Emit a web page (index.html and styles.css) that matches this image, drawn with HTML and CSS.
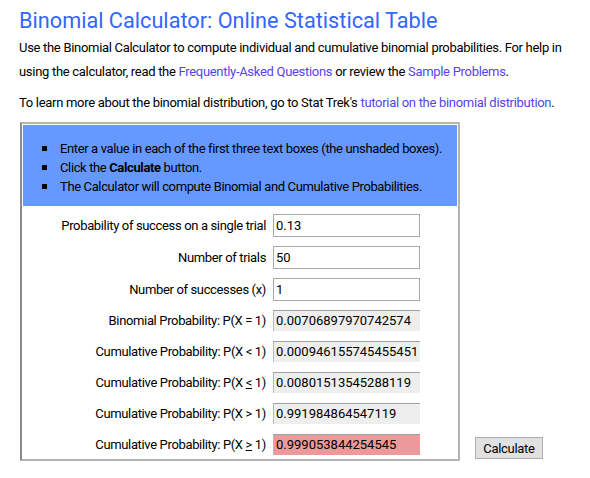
FILE: index.html
```html
<!DOCTYPE html>
<html>
<head>
<meta charset="utf-8">
<link rel="stylesheet" href="styles.css">
</head>
<body>
<h1 class="title">Binomial Calculator: Online Statistical Table</h1>
<p class="intro">Use the Binomial Calculator to compute individual and cumulative binomial probabilities. For help in using the calculator, read the <a class="link" href="#">Frequently-Asked Questions</a> or review the <a class="link" href="#">Sample Problems</a>.</p>
<p class="intro">To learn more about the binomial distribution, go to Stat Trek's <a class="link" href="#">tutorial on the binomial distribution</a>.</p>
<div class="calc">
  <div class="box">
    <div class="panel">
      <ul class="steps">
        <li>Enter a value in each of the first three text boxes (the unshaded boxes).</li>
        <li>Click the <b>Calculate</b> button.</li>
        <li>The Calculator will compute Binomial and Cumulative Probabilities.</li>
      </ul>
    </div>
    <div class="rows">
      <div class="row in"><span class="label">Probability of success on a single trial</span><span class="field">0.13</span></div>
      <div class="row in"><span class="label">Number of trials</span><span class="field">50</span></div>
      <div class="row in"><span class="label">Number of successes (x)</span><span class="field">1</span></div>
      <div class="row out"><span class="label">Binomial Probability: P(X = 1)</span><span class="field">0.00706897970742574</span></div>
      <div class="row out"><span class="label">Cumulative Probability: P(X &lt; 1)</span><span class="field">0.000946155745455451</span></div>
      <div class="row out"><span class="label">Cumulative Probability: P(X <u>&lt;</u> 1)</span><span class="field">0.00801513545288119</span></div>
      <div class="row out"><span class="label">Cumulative Probability: P(X &gt; 1)</span><span class="field">0.991984864547119</span></div>
      <div class="row out hot"><span class="label">Cumulative Probability: P(X <u>&gt;</u> 1)</span><span class="field">0.999053844254545</span></div>
    </div>
  </div>
  <button class="btn">Calculate</button>
</div>
</body>
</html>
```
FILE: styles.css
```css
body {
  margin: 0;
  padding: 2px 0 0 19px;
  font-family: Roboto, Lato, sans-serif;
  color: #000;
  background: #fff;
}
.title {
  margin: 0;
  padding-top: 4px;
  font-size: 21.7px;
  line-height: 30px;
  font-weight: 400;
  color: #3366ff;
}
.intro {
  margin: 0 0 7px;
  font-size: 13px;
  letter-spacing: -0.3px;
  line-height: 24px;
  color: #000;
}
.link {
  color: #5544ee;
  text-decoration: none;
}
.calc {
  display: flex;
  align-items: flex-end;
  gap: 15px;
  margin-top: 3px;
  margin-left: 1px;
}
.box {
  width: 434px;
  border: 2px solid #b4b4b4;
  border-left-color: #8c8c8c;
  padding: 1px;
}
.panel {
  background: #6699ff;
  padding: 14px 0 10px;
}
.steps {
  margin: 0;
  padding-left: 37px;
  list-style: none;
  font-size: 13px;
  letter-spacing: -0.37px;
  line-height: 19px;
}
.steps li::before {
  content: "";
  display: inline-block;
  width: 5px;
  height: 5px;
  background: #000;
  margin: 0 13px 0 -18px;
  vertical-align: 2px;
}
.rows {
  display: flex;
  flex-direction: column;
  padding-top: 8px;
  padding-bottom: 3px;
}
.row {
  display: flex;
  align-items: flex-start;
  justify-content: flex-end;
  padding-right: 37px;
  font-size: 13px;
  letter-spacing: -0.35px;
}
.row.in { height: 32px; }
.row.out { height: 31px; }
.row.hot { height: 21px; }
.label {
  margin-right: 7px;
  line-height: 23px;
}
.row.out .label { line-height: 21px; }
.field {
  box-sizing: border-box;
  width: 147px;
  padding-left: 2px;
  white-space: nowrap;
  font-size: 13px;
  letter-spacing: 0;
}
.row.in .field {
  height: 23px;
  line-height: 21px;
  border: 1px solid #a9a9a9;
  background: #fff;
}
.row.out .field {
  height: 21px;
  line-height: 20px;
  background: #eeeeee;
  border-top: 1px solid #a0a0a0;
  border-left: 1px solid #b8b8b8;
}
.row.hot .field {
  background: #ee9999;
}
.btn {
  font-family: inherit;
  font-size: 13px;
  letter-spacing: -0.3px;
  width: 68px;
  height: 22px;
  padding: 0;
  margin-bottom: 2px;
  background: #e1e1e1;
  border: 1px solid #adadad;
  border-radius: 0;
  color: #000;
}
```
